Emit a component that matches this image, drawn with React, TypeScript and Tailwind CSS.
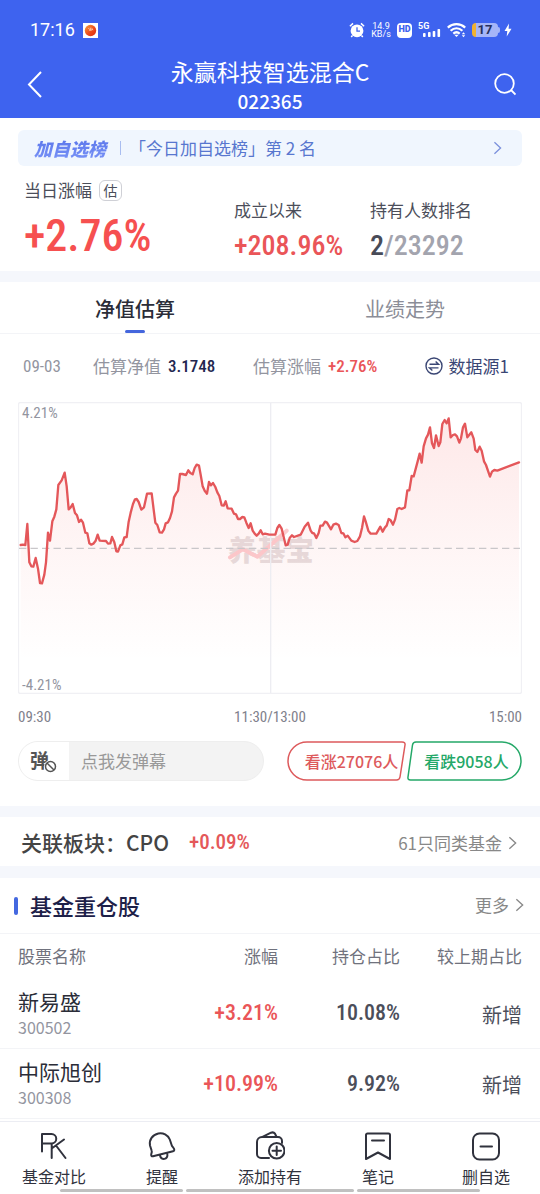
import React, { useState } from 'react';

const NUM = "font-['Roboto_Condensed','Roboto',sans-serif]";

const TREND =
  '62,451 68,450 76,451 82,388 88,503 94,515 100,516 107,490 114,522 120,565 126,566 133,540 138,503 144,414 150,438 157,380 163,366 169,344 175,271 185,257 194,234 200,275 206,344 212,338 218,328 225,355 231,362 237,382 243,375 249,384 256,414 262,416 268,446 274,450 280,447 287,438 293,420 299,438 318,439 324,447 331,446 336,427 343,443 349,470 354,471 361,452 367,449 373,428 380,427 386,381 392,354 399,328 405,314 410,313 416,322 424,345 432,338 441,297 455,296 461,345 466,384 472,391 479,413 486,414 492,404 497,386 504,383 510,370 516,350 522,308 528,297 534,288 540,238 547,238 558,241 565,227 571,235 578,239 584,220 590,210 597,213 602,240 608,275 614,288 621,297 627,262 633,272 639,265 646,277 652,293 658,304 665,332 671,333 677,320 683,341 695,342 702,357 708,359 714,373 720,373 727,367 733,368 739,384 746,400 752,386 758,408 764,417 770,423 776,417 782,407 788,419 795,417 808,420 826,420 832,400 838,391 845,402 857,452 863,450 869,430 876,422 882,427 902,420 914,396 924,384 932,408 937,415 942,416 949,430 956,415 961,393 968,393 975,381 981,384 993,404 1000,390 1008,387 1016,391 1024,415 1030,416 1036,428 1043,423 1054,438 1064,442 1072,439 1080,425 1086,400 1092,365 1097,380 1105,408 1112,417 1129,417 1141,396 1148,411 1155,398 1160,393 1166,373 1172,377 1179,390 1185,375 1192,343 1198,340 1205,343 1215,338 1222,287 1228,287 1235,244 1241,245 1253,200 1259,177 1265,204 1271,155 1278,131 1284,120 1290,98 1296,146 1302,160 1308,122 1316,154 1321,143 1327,88 1334,76 1340,86 1346,71 1352,128 1359,121 1365,119 1371,125 1378,144 1383,131 1389,98 1395,87 1402,128 1414,113 1421,132 1426,166 1432,172 1439,156 1445,168 1452,200 1458,211 1470,246 1476,231 1483,226 1492,228 1557,203';

interface Holding {
  name: string;
  code: string;
  change: string;
  ratio: string;
  diff: string;
}

const HOLDINGS: Holding[] = [
  { name: '新易盛', code: '300502', change: '+3.21%', ratio: '10.08%', diff: '新增' },
  { name: '中际旭创', code: '300308', change: '+10.99%', ratio: '9.92%', diff: '新增' },
];

const Chevron: React.FC<{ className?: string }> = ({ className }) => (
  <svg viewBox="0 0 10 16" className={className} fill="none" stroke="currentColor" strokeWidth="1.5" aria-hidden="true">
    <path d="M1.5 1.5 8.5 8l-7 6.5" />
  </svg>
);

const StatusBar = () => (
  <div className="flex h-[58px] items-center justify-between pl-[30px] pr-7 pt-0.5">
    <div className="flex items-center gap-2">
      <span className="font-['Roboto',sans-serif] text-lg leading-6">17:16</span>
      <svg viewBox="0 0 15 15" className="size-[15px]" aria-hidden="true">
        <defs>
          <linearGradient id="ball" x1="0" y1="0" x2="1" y2="1">
            <stop offset="0" stopColor="#f7a13a" />
            <stop offset=".55" stopColor="#ee4a1c" />
            <stop offset="1" stopColor="#d92a12" />
          </linearGradient>
        </defs>
        <rect width="15" height="15" fill="#fff" />
        <circle cx="7.5" cy="7.5" r="5.7" fill="url(#ball)" />
        <path d="M5.2 5.2 7 6.6M7.2 4.6l.8 3.2M8.6 4.8l1.4 2.4M6 7.4l3.6-.8" stroke="#ffe2c4" strokeWidth=".7" />
      </svg>
    </div>
    <div className="flex items-center gap-1.5">
      <svg viewBox="0 0 16 16" className="size-4" aria-hidden="true">
        <circle cx="8" cy="8.8" r="6.4" fill="#fff" />
        <path d="M.9 4.2 4 1.4M15.1 4.2 12 1.4M3.5 13.5 2.2 15M12.5 13.5l1.3 1.5" stroke="#fff" strokeWidth="1.5" />
        <path d="M8 5.2v4h3" fill="none" stroke="#3e63ef" strokeWidth="1.3" />
      </svg>
      <div className="w-5 text-center font-['Roboto',sans-serif] text-[9px] leading-2">
        <div>14.9</div>
        <div>KB/s</div>
      </div>
      <div className="flex size-[15px] items-center justify-center rounded bg-white font-['Roboto',sans-serif] text-[9px] font-black text-[#3e63ef]">
        HD
      </div>
      <svg viewBox="0 0 23 16" className="h-4 w-[23px]" fill="#fff" aria-hidden="true">
        <text x="0" y="7" fontSize="9" fontWeight="700" fontFamily="Roboto, sans-serif">5G</text>
        <rect x="5" y="11" width="2.6" height="4" rx=".8" />
        <rect x="10" y="10" width="2.6" height="5" rx=".8" />
        <rect x="14.7" y="9" width="2.6" height="6" rx=".8" />
        <rect x="19.5" y="7" width="2.6" height="8" rx=".8" />
      </svg>
      <svg viewBox="0 0 19 16" className="h-4 w-[19px]" fill="none" stroke="#fff" strokeWidth="2.2" aria-hidden="true">
        <path d="M.8 5.6c5-4.6 12.4-4.6 17.4 0" />
        <path d="M3.6 8.7c3.6-3.2 8.2-3.2 11.8 0" />
        <path d="M6.3 11.6c2-1.7 4.4-1.7 6.4 0" />
        <path d="M7.3 12.7h4.4L9.5 15z" fill="#fff" stroke="none" />
        <path d="M14.8 12.2l1.7-2 1.7 2zM14.8 13.2l1.7 2 1.7-2z" fill="#fff" stroke="none" />
      </svg>
      <div className="flex items-center">
        <div className="flex h-3.5 w-[26px] items-center justify-center rounded border-l-4 border-[#f0b232] bg-[#a5b5f8] pr-1 font-['Roboto',sans-serif] text-[13px] font-bold text-[#27305c]">
          17
        </div>
        <div className="h-1.5 w-0.5 rounded-r bg-[#a5b5f8]" />
        <svg viewBox="0 0 8 14" className="ml-1 h-3.5 w-2" fill="#fff" aria-hidden="true">
          <path d="M5 .5.5 8h2.8L2.7 13.5 7.5 5.8H4.6z" />
        </svg>
      </div>
    </div>
  </div>
);

const Header = () => (
  <header className="bg-[#3e63ef] text-white">
    <StatusBar />
    <div className="flex h-[60px] items-center justify-between px-6 pb-0.5">
      <button aria-label="返回" className="pb-1.5">
        <svg viewBox="0 0 22 28" className="h-7 w-[22px]" fill="none" stroke="#fff" strokeWidth="2" aria-hidden="true">
          <path d="M17 2 5 14.5 17 27" />
        </svg>
      </button>
      <div className="text-center">
        <h1 className="text-[23px] leading-7">永赢科技智选混合C</h1>
        <div className="text-[19px] font-medium leading-8">022365</div>
      </div>
      <button aria-label="搜索" className="pb-1.5">
        <svg viewBox="0 0 22 24" className="h-6 w-[22px]" fill="none" stroke="#fff" strokeWidth="1.8" aria-hidden="true">
          <circle cx="10.5" cy="11.5" r="9.3" />
          <path d="m17 18 4.500 4.500" />
        </svg>
      </button>
    </div>
  </header>
);

const Summary = () => (
  <section className="px-[18px] pb-[5px] pt-3">
    <a href="#rank" className="flex h-9 items-center rounded-md bg-[#f0f6fe] pl-4 pr-5 text-[17px] text-[#5877cf]">
      <span className="bg-linear-to-b from-[#5570e8] to-[#7c95f8] bg-clip-text pr-1 text-lg font-black italic text-transparent">加自选榜</span>
      <span className="ml-2.5 h-3.5 w-px bg-[#a9bdf0]" />
      <span className="ml-2">「今日加自选榜」第 2 名</span>
      <Chevron className="ml-auto h-3.5 w-[9px] text-[#7b90dc]" />
    </a>
    <div className="flex pl-1.5 pt-3">
      <div className="w-[210px]">
        <div className="flex h-6 items-center gap-[7px] text-[17px] text-[#4b4e5a]">
          当日涨幅
          <span className="flex h-[21px] w-[23px] items-center justify-center rounded-md border border-[#cfd0d6] text-sm">估</span>
        </div>
        <div className={`${NUM} pt-1 text-[44px] font-medium leading-[60px] text-[#f65050]`}>+2.76%</div>
      </div>
      <div className="w-[136px] pt-5">
        <div className="text-[17px] leading-6 text-[#4b4e5a]">成立以来</div>
        <div className={`${NUM} pt-1 text-[28px] font-medium leading-10 text-[#ea5558]`}>+208.96%</div>
      </div>
      <div className="pt-5">
        <div className="text-[17px] leading-6 text-[#4b4e5a]">持有人数排名</div>
        <div className={`${NUM} pt-1 text-[28px] font-medium leading-10 text-[#a3a4ae]`}>
          <span className="text-[#484b57]">2</span>/23292
        </div>
      </div>
    </div>
  </section>
);

const Tabs = () => {
  const [active, setActive] = useState(0);
  return (
    <div role="tablist" className="grid grid-cols-2 border-b border-[#f3f4f7]">
      {['净值估算', '业绩走势'].map((label, i) => (
        <button key={label} role="tab" aria-selected={i === active} onClick={() => setActive(i)} className="flex flex-col items-center pt-2.5 text-xl">
          <span className={i === active ? 'h-[38px] leading-[34px] font-medium text-[#2b2d38]' : 'h-[38px] leading-[34px] text-[#8b8d97]'}>{label}</span>
          <span className={i === active ? 'h-[3px] w-5 rounded-full bg-[#4466dd]' : 'h-[3px] w-5'} />
        </button>
      ))}
    </div>
  );
};

const Estimate = () => (
  <div className="flex items-center pl-[23px] pr-[31px] pb-6 pt-5 text-[17px] leading-6 text-[#93959f]">
    <span className={`${NUM} w-[70px]`}>09-03</span>
    <span className="flex w-40 gap-[7px]">
      估算净值
      <b className={`${NUM} font-medium text-[#23264f]`}>3.1748</b>
    </span>
    <span className="flex gap-[7px]">
      估算涨幅
      <b className={`${NUM} font-medium text-[#ea5558]`}>+2.76%</b>
    </span>
    <button className="ml-auto flex items-center gap-1.5 text-[#3a4674]">
      <svg viewBox="0 0 18 18" className="size-[18px]" fill="none" stroke="currentColor" strokeWidth="1.4" aria-hidden="true">
        <circle cx="9" cy="9" r="8" />
        <path d="M4.5 7.2h9L10.6 4.6M13.5 10.9h-9l2.9 2.6" />
      </svg>
      数据源1
    </button>
  </div>
);

const TrendChart = () => (
  <div className="px-[18px]">
    <div className="relative">
      <svg viewBox="54 22 1512 876" className="block w-full" role="img" aria-label="估算走势">
        <defs>
          <linearGradient id="area" gradientUnits="userSpaceOnUse" x1="0" y1="70" x2="0" y2="800">
            <stop offset="0" stopColor="#f65050" stopOpacity=".13" />
            <stop offset=".5" stopColor="#f65050" stopOpacity=".06" />
            <stop offset="1" stopColor="#f65050" stopOpacity="0" />
          </linearGradient>
        </defs>
        <rect x="55.5" y="23.5" width="1509" height="873" rx="6" fill="none" stroke="#f0f0f4" strokeWidth="4" />
        <text x="684" y="498" fontFamily="'Noto Sans CJK SC', sans-serif" fontWeight="900" fontSize="86" fill="#e6dfe0">养基宝</text>
        <path d="M690 488 728 464 772 486 860 408" fill="none" stroke="#fccdd0" strokeWidth="12" strokeLinecap="round" strokeLinejoin="round" />
        <path d={`M62 800 L${TREND} L1557 800 Z`} fill="url(#area)" />
        <path d="M812 24V896" stroke="#ededf2" strokeWidth="4" />
        <path d="M57 461H1560" stroke="#c9c7ca" strokeWidth="4" strokeDasharray="22 12.5" />
        <polyline points={TREND} fill="none" stroke="#e4575a" strokeWidth="7" strokeLinejoin="round" strokeLinecap="round" />
      </svg>
      <span className={`${NUM} absolute left-1 top-px text-[15px] leading-5 text-[#93959f]`}>4.21%</span>
      <span className={`${NUM} absolute -bottom-px left-1 text-[15px] leading-5 text-[#93959f]`}>-4.21%</span>
    </div>
    <div className={`${NUM} flex justify-between pt-[11px] text-[15px] leading-6 text-[#7f818c]`}>
      <span>09:30</span>
      <span>11:30/13:00</span>
      <span>15:00</span>
    </div>
  </div>
);

const Votes = () => (
  <div className="flex justify-between px-[18px] pb-[25px] pt-3">
    <div className="flex h-10 w-[246px] overflow-hidden rounded-full border border-[#eeeeee] bg-[#f3f3f3]">
      <button aria-label="弹幕开关" className="flex w-[50px] items-center justify-center bg-white text-[#555555]">
        <svg viewBox="0 0 28 26" className="h-[26px] w-7 overflow-visible" fill="none" stroke="currentColor" aria-hidden="true">
          <text x="0" y="20" fontSize="19" fontWeight="700" fontFamily="'Noto Sans CJK SC', sans-serif" fill="currentColor" stroke="none">弹</text>
          <circle cx="20.5" cy="18.5" r="6.5" fill="#fff" stroke="none" />
          <circle cx="20.5" cy="18.5" r="5" strokeWidth="1.5" />
          <path d="m17 15 7 7" strokeWidth="1.5" />
        </svg>
      </button>
      <input aria-label="发弹幕" placeholder="点我发弹幕" className="min-w-0 flex-1 px-3 text-[17px] outline-none placeholder:text-[#999999]" />
    </div>
    <div className="flex gap-px">
      <button className="relative h-10 w-[119px] pl-2.5 text-base font-medium text-[#dd5a5c]">
        <svg viewBox="0 0 119 40" className="absolute inset-0 size-full" fill="none" stroke="currentColor" strokeWidth="1.5" aria-hidden="true">
          <path d="M20 1h95q3.500 0 3 3l-5 32q-.5 3-3.500 3H20a19 19 0 0 1 0-38z" />
        </svg>
        看涨27076人
      </button>
      <button className="relative h-10 w-[115px] pl-1 text-base font-medium text-[#24a868]">
        <svg viewBox="0 0 115 40" className="absolute inset-0 size-full" fill="none" stroke="currentColor" strokeWidth="1.5" aria-hidden="true">
          <path d="M95 1H9q-3 0-3.500 3L1 36q-.5 3 2.500 3H95a19 19 0 0 0 0-38z" />
        </svg>
        看跌9058人
      </button>
    </div>
  </div>
);

const Sector = () => (
  <section className="flex h-[49px] items-center pl-[21px] pr-[23px] pt-0.5">
    <h2 className="text-[21px] font-medium text-[#444444]">关联板块：CPO</h2>
    <span className={`${NUM} ml-5 text-[21px] font-medium text-[#e4585a]`}>+0.09%</span>
    <a href="#similar" className="ml-auto flex items-center gap-1.5 text-[17px] text-[#888888]">
      61只同类基金
      <Chevron className="h-4 w-[9px]" />
    </a>
  </section>
);

const Holdings = () => (
  <section>
    <div className="flex h-14 items-center border-b border-[#f3f4f7] pl-3.5 pr-4">
      <span className="h-[18px] w-1 rounded-full bg-[#4468e0]" />
      <h2 className="ml-3 text-[22px] font-medium text-[#1d2048]">基金重仓股</h2>
      <a href="#more" className="ml-auto flex items-center gap-1.5 pb-0.5 text-[17px] text-[#888888]">
        更多
        <Chevron className="h-4 w-[9px]" />
      </a>
    </div>
    <table className="w-full table-fixed">
      <thead>
        <tr className="h-11 text-[17px] text-[#70727d] [&>th]:font-normal">
          <th className="w-[32%] pl-[18px] text-left">股票名称</th>
          <th className="text-right">涨幅</th>
          <th className="w-[122px] text-right">持仓占比</th>
          <th className="w-[140px] pr-[18px] text-right">较上期占比</th>
        </tr>
      </thead>
      <tbody>
        {HOLDINGS.map((h) => (
          <tr key={h.code} className="h-[70px] border-b border-[#f3f4f7]">
            <td className="pl-[18px] text-[21px] leading-7 text-[#2b2d38]">
              {h.name}
              <div className="text-base leading-6 text-[#93959f]">{h.code}</div>
            </td>
            <td className={`${NUM} text-right text-[22px] font-medium text-[#ea5558]`}>{h.change}</td>
            <td className={`${NUM} text-right text-[22px] font-medium text-[#4b4e5a]`}>{h.ratio}</td>
            <td className="pr-[18px] pt-1 text-right text-xl text-[#4b4e5a]">{h.diff}</td>
          </tr>
        ))}
      </tbody>
    </table>
  </section>
);

const NAV_ITEMS = [
  { label: '基金对比', icon: <path d="M3 20.5V3h9.5a4.7 4.7 0 0 1 0 9.5H3M12.7 12.5V27M25 8.5 12.7 17.5M17 14.5 26.5 27" /> },
  {
    label: '提醒',
    icon: (
      <>
        <path d="M11.3 2.5C16 1.5 21 4 22.8 8.5l2 6c.5 1.5 2.7 2.5 2.5 4.5q-.1 1-1.3 1.3L6 25.2q-2 .3-1.8-1.7c.1-1.5 1.1-2 .4-4L3 14.5C1.8 9 5.5 3.7 11.3 2.5z" />
        <path d="M13 24.5c1 5.5 8.5 4 7.3-1.5" />
      </>
    ),
  },
  {
    label: '添加持有',
    icon: (
      <>
        <path d="M14 27H6a4 4 0 0 1-4-4V11a5 5 0 0 1 5-5h16a4 4 0 0 1 4 4v2M8 5.7l8-4q2.5-1 4 1l1.5 3" />
        <circle cx="21.7" cy="19.7" r="7.8" />
        <path d="M21.7 15.5V24M17.5 19.7H26" />
      </>
    ),
  },
  { label: '笔记', icon: <path d="M4.500 2.500h21a1.500 1.500 0 0 1 1.500 1.500v24l-12-6.500L3 28V4a1.500 1.500 0 0 1 1.500-1.500zM9 9.500h12" /> },
  {
    label: '删自选',
    icon: (
      <>
        <rect x="2" y="2.5" width="26" height="26" rx="6.5" />
        <path d="M9.5 15.5H21" />
      </>
    ),
  },
];

const BottomNav = () => (
  <nav className="relative mt-0.5 border-t border-[#ecedf3] bg-white pb-0.5">
    <div className="grid grid-cols-5">
      {NAV_ITEMS.map((item) => (
        <button key={item.label} className="flex h-[70px] flex-col items-center pt-[9px] text-base leading-6 text-[#30323d]">
          <svg viewBox="0 0 30 31" className="mb-0.5 h-[31px] w-[30px]" fill="none" stroke="currentColor" strokeWidth="2" strokeLinejoin="round" strokeLinecap="round" aria-hidden="true">
            {item.icon}
          </svg>
          {item.label}
        </button>
      ))}
    </div>
    {/* gesture bar */}
    <div className="absolute bottom-0.5 left-1/2 flex h-[3px] w-[420px] -translate-x-1/2 gap-[3px]">
      <span className="w-[123px] rounded-full bg-[#c0c0c0]" />
      <span className="flex-1 rounded-full bg-[#c0c0c0]" />
      <span className="w-[123px] rounded-full bg-[#c0c0c0]" />
    </div>
  </nav>
);

export default function App() {
  return (
    <main className="bg-white font-['Noto_Sans_CJK_SC',sans-serif]">
      <Header />
      <Summary />
      <div className="h-[11px] bg-[#f5f7fc]" />
      <Tabs />
      <Estimate />
      <TrendChart />
      <Votes />
      <div className="h-[11px] bg-[#f5f7fc]" />
      <Sector />
      <div className="h-3 bg-[#f5f7fc]" />
      <Holdings />
      <BottomNav />
    </main>
  );
}
